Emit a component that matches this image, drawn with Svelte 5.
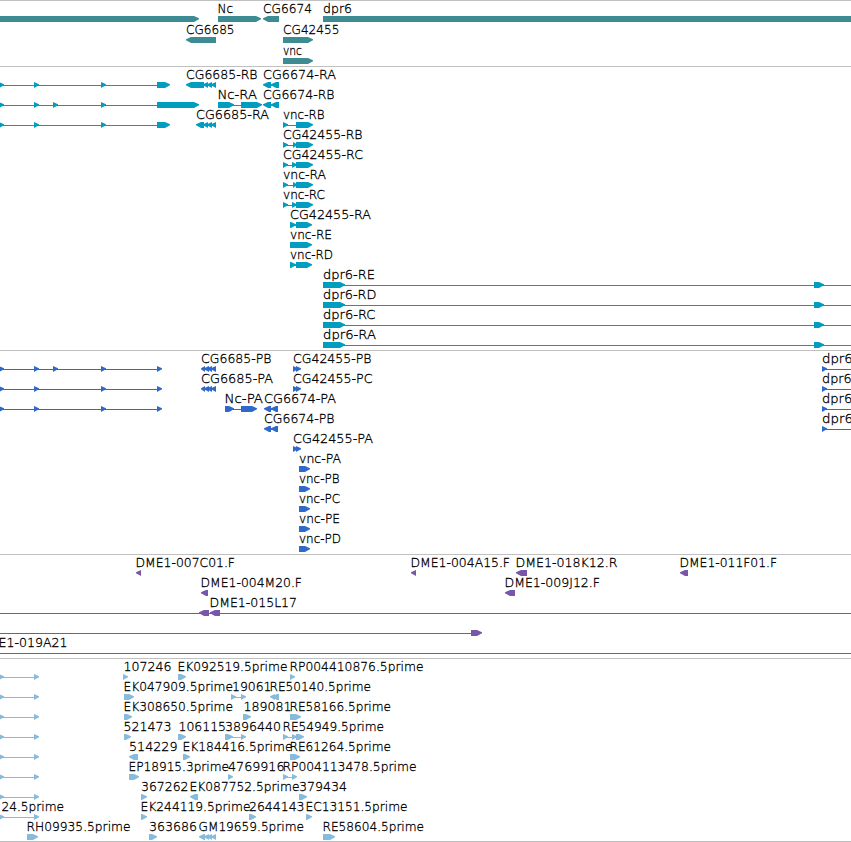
<script lang="ts">
  type Feature = {
    row: number;
    parts: number[][];
    dir?: 'left' | 'right';
    line?: number[];
    label?: string;
    // left and right edge of the label
    text?: number[];
  };

  type Track = {
    name: string;
    height: number;
    pitch: number;
    features: Feature[];
  };

  const WIDTH = 851;

  const f = (row: number, parts: number[][], label = '', text: number[] = [], line: number[] = []): Feature => ({
    row, parts, label, text, line, dir: 'right',
  });
  const r = (row: number, parts: number[][], label = '', text: number[] = [], line: number[] = []): Feature => ({
    ...f(row, parts, label, text, line),
    dir: 'left',
  });

  const exons = [[-1, 4], [34, 39], [101, 106]];
  const coding = [[201, 205], [204, 209], [207, 212], [211, 216]];

  const genes: Feature[] = [
    f(0, [[-10, 199]]),
    f(0, [[218, 261]], 'Nc', [217.5, 233]),
    r(0, [[263, 279]], 'CG6674', [263, 312]),
    f(0, [[323, 870]], 'dpr6', [323, 352]),
    r(1, [[186, 216]], 'CG6685', [186, 234.5]),
    f(1, [[283, 313]], 'CG42455', [283, 339.5]),
    f(2, [[283, 313]], 'vnc', [283, 302]),
  ];

  const transcripts: Feature[] = [
    f(0, [...exons, [157, 170]], '', [], [0, 160]),
    r(0, [[186, 204], [203, 208], [207, 212], [211, 216]], 'CG6685-RB', [186, 257.5]),
    r(0, [[263, 271], [271, 279]], 'CG6674-RA', [263, 336], [264, 278]),
    f(1, [...exons, [53, 58], [157, 199]], '', [], [0, 160]),
    f(1, [[218, 234], [241, 262]], 'Nc-RA', [217.5, 257], [232, 242]),
    r(1, [[263, 271], [271, 279]], 'CG6674-RB', [263, 334.5], [264, 278]),
    f(2, [...exons, [157, 170]], '', [], [0, 160]),
    r(2, [[196, 204], [203, 208], [207, 212], [211, 216]], 'CG6685-RA', [196, 269]),
    f(2, [[283, 288], [296, 313]], 'vnc-RB', [283, 324.5], [286, 297]),
    f(3, [[283, 288], [293, 297], [296, 313]], 'CG42455-RB', [283, 362.5], [286, 297]),
    f(4, [[283, 288], [292, 297], [296, 313]], 'CG42455-RC', [283, 363], [286, 297]),
    f(5, [[283, 288], [293, 297], [296, 313]], 'vnc-RA', [283, 326], [286, 297]),
    f(6, [[283, 288], [292, 297], [296, 313]], 'vnc-RC', [283, 325], [286, 297]),
    f(7, [[290, 296], [296, 312]], 'CG42455-RA', [290, 371], [291, 297]),
    f(8, [[290, 312]], 'vnc-RE', [290, 332]),
    f(9, [[290, 296], [296, 312]], 'vnc-RD', [290, 333], [291, 297]),
    f(10, [[323, 345], [814, 824]], 'dpr6-RE', [323, 375], [340, WIDTH]),
    f(11, [[323, 345], [814, 824]], 'dpr6-RD', [323, 376.5], [340, WIDTH]),
    f(12, [[323, 345], [814, 824]], 'dpr6-RC', [323, 375.5], [340, WIDTH]),
    f(13, [[323, 345], [814, 824]], 'dpr6-RA', [323, 376], [340, WIDTH]),
  ];

  const proteins: Feature[] = [
    f(0, [...exons, [53, 58], [157, 162]], '', [], [0, 160]),
    r(0, coding, 'CG6685-PB', [201, 271.5]),
    f(0, [[293, 298], [296, 301]], 'CG42455-PB', [293, 371.5]),
    f(0, [[822, 827]], 'dpr6-PE', [822, 874], [823, WIDTH]),
    f(1, [...exons, [157, 162]], '', [], [0, 160]),
    r(1, coding, 'CG6685-PA', [201, 273]),
    f(1, [[293, 298], [296, 301]], 'CG42455-PC', [293, 372.5]),
    f(1, [[822, 827]], 'dpr6-PD', [822, 874], [823, WIDTH]),
    f(2, [...exons, [157, 162]], '', [], [0, 160]),
    f(2, [[225, 234], [241, 257]], 'Nc-PA', [224.5, 263], [230, 242]),
    r(2, [[264, 271], [271, 278]], 'CG6674-PA', [264, 336], [266, 276]),
    f(2, [[822, 827]], 'dpr6-PC', [822, 874], [823, WIDTH]),
    r(3, [[264, 271], [271, 278]], 'CG6674-PB', [264, 334.5], [266, 276]),
    f(3, [[822, 827]], 'dpr6-PA', [822, 874], [823, WIDTH]),
    f(4, [[293, 298], [296, 301]], 'CG42455-PA', [293, 373]),
    f(5, [[299, 310]], 'vnc-PA', [299, 341]),
    f(6, [[299, 310]], 'vnc-PB', [299, 339.5]),
    f(7, [[299, 310]], 'vnc-PC', [299, 340]),
    f(8, [[299, 310]], 'vnc-PE', [299, 340]),
    f(9, [[299, 310]], 'vnc-PD', [299, 341]),
  ];

  const clones: Feature[] = [
    r(0, [[136, 141]], 'DME1-007C01.F', [135.5, 235]),
    r(0, [[411, 416]], 'DME1-004A15.F', [410.5, 510]),
    r(0, [[516, 527]], 'DME1-018K12.R', [515.5, 617.5]),
    r(0, [[680, 688]], 'DME1-011F01.F', [679.5, 777]),
    r(1, [[201, 208]], 'DME1-004M20.F', [200.5, 302]),
    r(1, [[505, 515]], 'DME1-009J12.F', [504.5, 600]),
    r(2, [[199, 209], [210, 220]], 'DME1-015L17', [209.5, 297], [0, WIDTH]),
    f(3, [[471, 482]], '', [], [0, 475]),
    f(4, [], 'DME1-019A21', [-22, 67.5], [0, WIDTH]),
  ];

  const ests: Feature[] = [
    ...[0, 1, 2, 3, 4, 5, 6, 7].map((row) => f(row, [[-1, 4], [34, 39]], '', [], [0, 36])),
    f(0, [[123, 128]], '107246', [123.5, 171.5]),
    f(0, [[178, 186]], 'EK092519.5prime', [177.5, 287.5]),
    f(0, [[290, 295]], 'RP004410876.5prime', [289.5, 423.5]),
    f(1, [[124, 134]], 'EK047909.5prime', [123.5, 233]),
    f(1, [[231, 236], [241, 246]], '19061', [232, 271.5], [233, 243]),
    r(1, [[270, 275], [272, 279]], 'RE50140.5prime', [269.5, 371]),
    f(2, [[124, 132]], 'EK308650.5prime', [123.5, 233]),
    f(2, [[243, 251]], '189081', [243.5, 291.5]),
    f(2, [[290, 301]], 'RE58166.5prime', [289.5, 391]),
    f(3, [[124, 131]], '521473', [123.5, 171.5]),
    f(3, [[178, 186]], '106115', [178.5, 226]),
    f(3, [[225, 233], [241, 246]], '3896440', [225, 281], [229, 243]),
    f(3, [[283, 288], [292, 297], [296, 304]], 'RE54949.5prime', [282.5, 384], [285, 297]),
    r(4, [[129, 138]], '514229', [129, 177.5]),
    f(4, [[183, 190]], 'EK184416.5prime', [182.5, 292.5]),
    f(4, [[290, 300]], 'RE61264.5prime', [289.5, 391]),
    f(5, [[129, 139]], 'EP18915.3prime', [128.5, 229]),
    f(5, [[228, 233]], '4769916', [228, 284.5]),
    f(5, [[283, 288], [292, 297]], 'RP004113478.5prime', [282.5, 416.5], [285, 294]),
    f(6, [[141, 147]], '367262', [141, 188.5]),
    r(6, [[190, 198]], 'EK087752.5prime', [189.5, 299.5]),
    f(6, [[299, 307]], '379434', [299, 347]),
    f(7, [], '24.5prime', [1.5, 64]),
    f(7, [[141, 147]], 'EK244119.5prime', [140.5, 250.5]),
    f(7, [[249, 256]], '2644143', [249, 304.5]),
    f(7, [[306, 312]], 'EC13151.5prime', [305.5, 407.5]),
    f(8, [[27, 38]], 'RH09935.5prime', [26.5, 130.5]),
    f(8, [[149, 157]], '363686', [149, 197]),
    r(8, [[199, 205], [204, 209], [207, 212], [211, 216]], 'GM19659.5prime', [198.5, 304]),
    f(8, [[323, 335]], 'RE58604.5prime', [322.5, 424]),
  ];

  const tracks: Track[] = [
    { name: 'gene', height: 65, pitch: 21, features: genes },
    { name: 'transcript', height: 283, pitch: 20, features: transcripts },
    { name: 'protein', height: 203, pitch: 20, features: proteins },
    { name: 'clone', height: 103, pitch: 20, features: clones },
    { name: 'est', height: 182, pitch: 20, features: ests },
  ];

  // block with a pointed end, 6px high
  const shape = ([x1, x2]: number[], y: number, dir?: string) => {
    const head = Math.min(5, x2 - x1);
    const [tail, neck, tip] = dir === 'left' ? [x2, x1 + head, x1] : [x1, x2 - head, x2];
    return `${tail},${y} ${neck},${y} ${tip},${y + 2.3} ${tip},${y + 3.3} ${neck},${y + 6} ${tail},${y + 6}`;
  };
</script>

<main class="browser">
  {#each tracks as track}
    <section class="track {track.name}">
      <svg width={WIDTH} height={track.height} viewBox="0 1 {WIDTH} {track.height}">
        {#each track.features as feature}
          {@const y = feature.row * track.pitch}
          {#if feature.line?.length}
            <rect x={feature.line[0]} y={y + 19} width={feature.line[1] - feature.line[0]} height="1" />
          {/if}
          {#each feature.parts as part}
            <polygon points={shape(part, y + 16, feature.dir)} />
          {/each}
        {/each}
        {#each track.features as feature}
          {#if feature.label && feature.text}
            <text
              x={feature.text[0]}
              y={feature.row * track.pitch + 13}
              textLength={feature.text[1] - feature.text[0]}
              lengthAdjust="spacingAndGlyphs">{feature.label}</text>
          {/if}
        {/each}
      </svg>
    </section>
  {/each}
</main>

<style>
  :global(body) {
    margin: 0;
    background: white;
  }

  .browser {
    width: 851px;
    overflow: hidden;
    border-bottom: 1px solid #c0c0c0;
  }

  .track {
    border-top: 1px solid #c0c0c0;
  }

  svg {
    display: block;
  }

  text {
    font-family: 'DejaVu Sans', sans-serif;
    font-weight: 200;
    font-size: 12px;
    fill: black;
    stroke: black;
    stroke-width: 0.3px;
  }

  .gene {
    fill: #3d8c93;
  }

  .transcript {
    fill: #009dc0;
  }

  .protein {
    fill: #3069cc;
  }

  .clone {
    fill: #7856a9;
  }

  .est {
    fill: #86bbdc;
  }
</style>
